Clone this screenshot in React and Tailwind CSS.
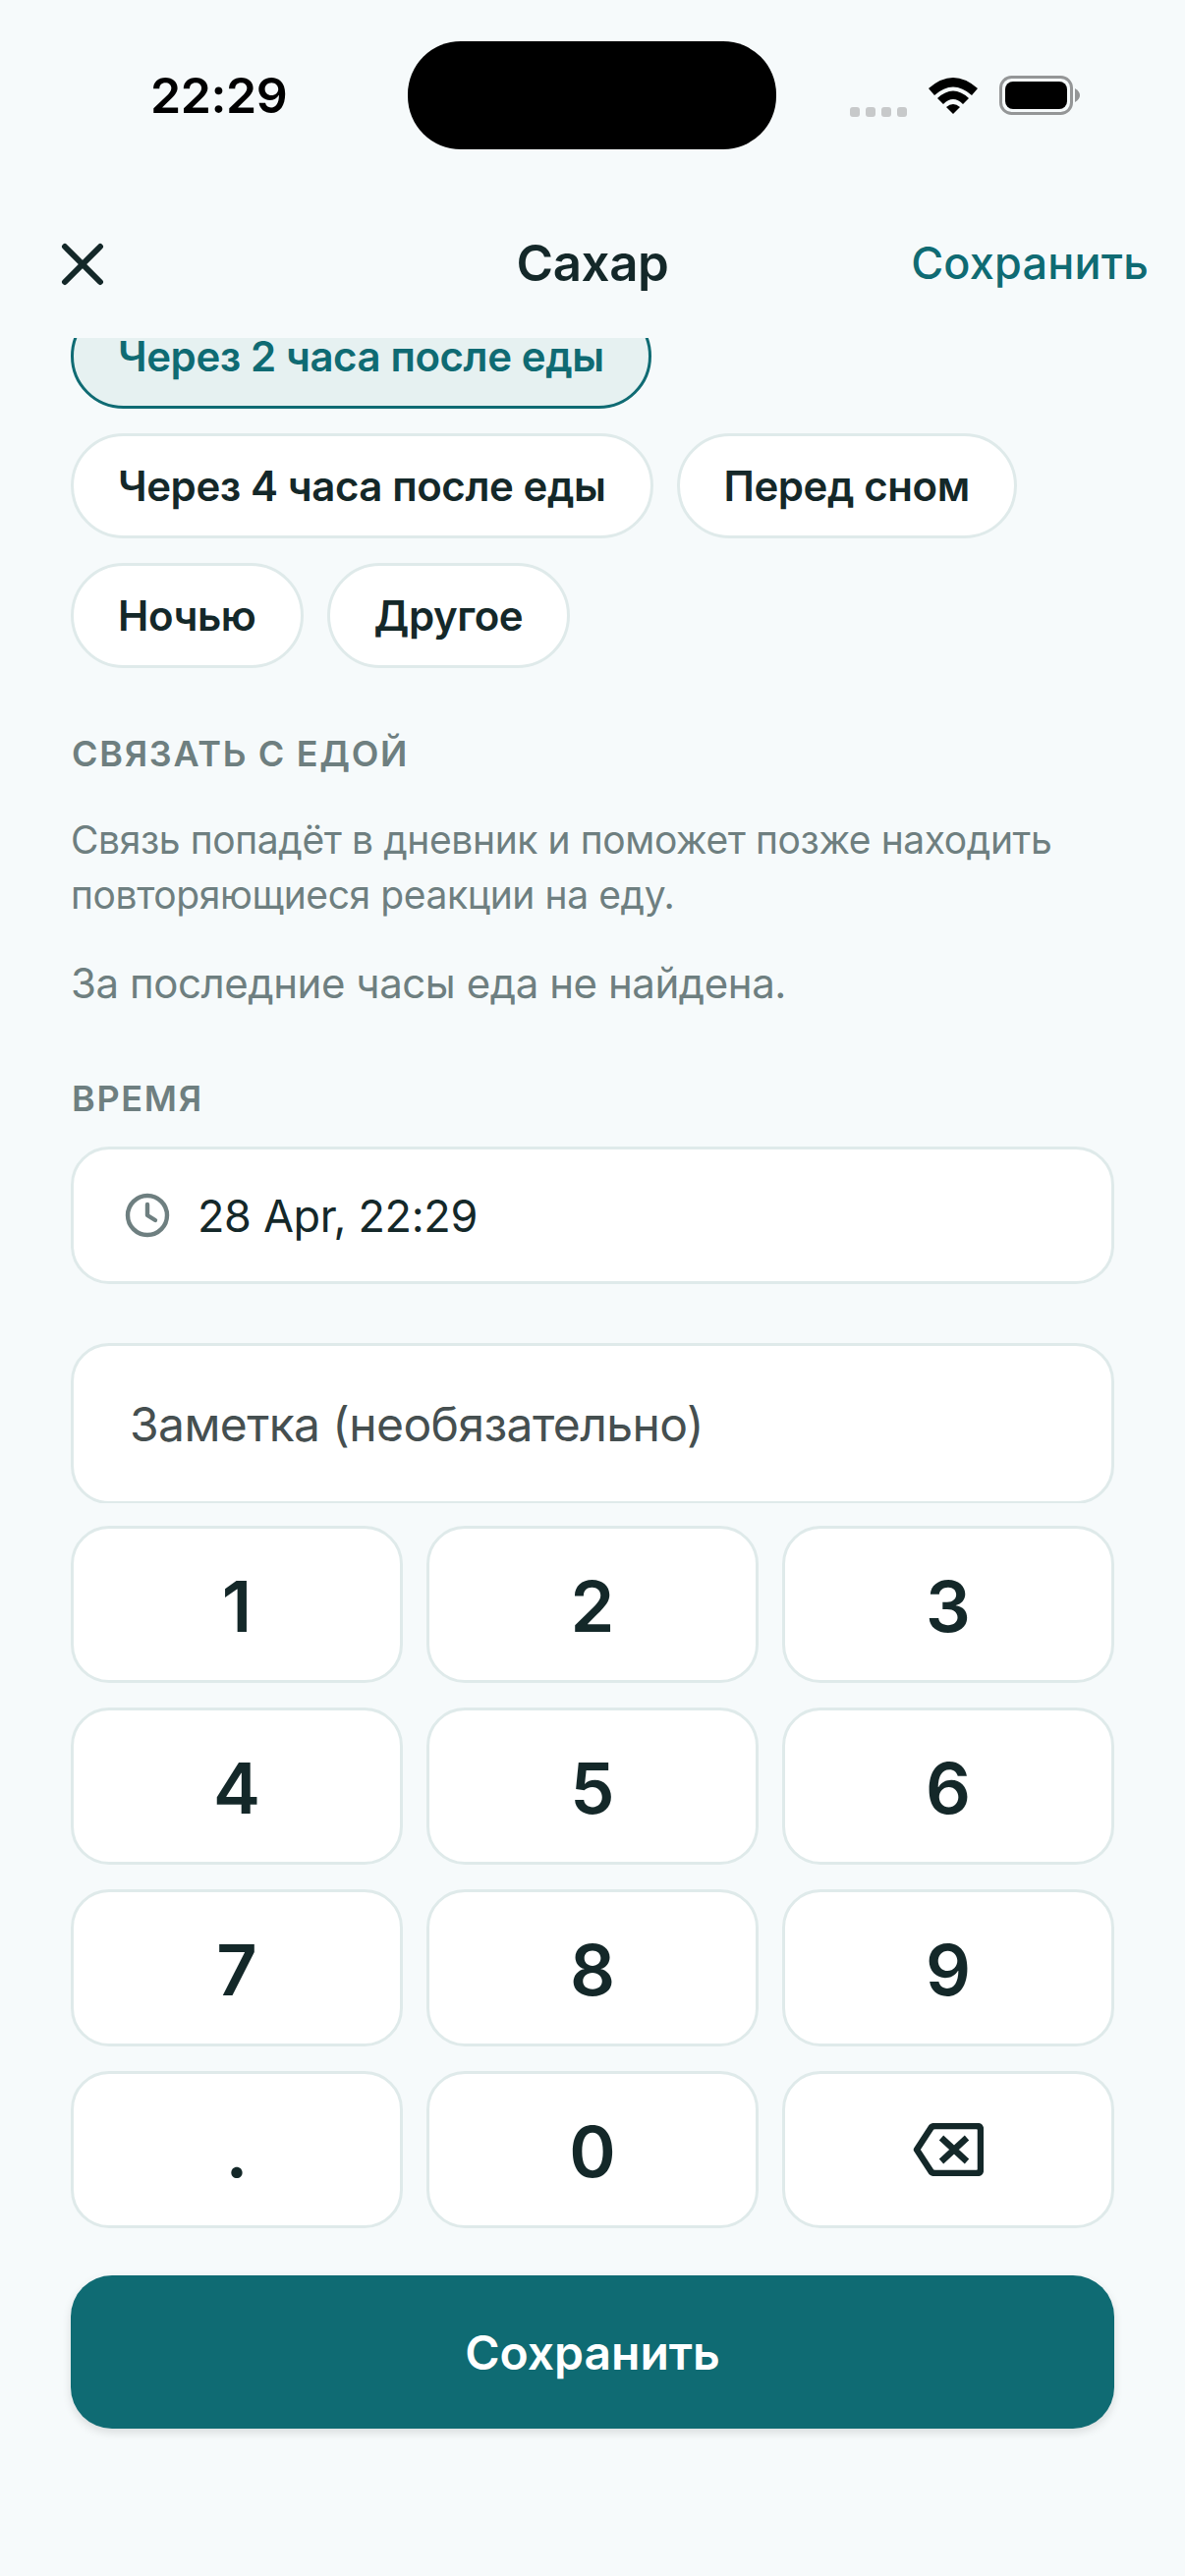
import React from 'react';
import { X } from 'lucide-react';

const chipRows = [
  [{ label: 'Через 2 часа после еды', active: true }],
  [{ label: 'Через 4 часа после еды' }, { label: 'Перед сном' }],
  [{ label: 'Ночью' }, { label: 'Другое' }],
];

const keys = ['1', '2', '3', '4', '5', '6', '7', '8', '9', '.', '0', 'back'];

const StatusIcons = () => (
  <div className="flex items-center">
    <div className="flex gap-[6px] mt-[33px] mr-[22px]">
      <span className="w-[10px] h-[10px] rounded-[3px] bg-[#c7c9ca]"></span>
      <span className="w-[10px] h-[10px] rounded-[3px] bg-[#c7c9ca]"></span>
      <span className="w-[10px] h-[10px] rounded-[3px] bg-[#c7c9ca]"></span>
      <span className="w-[10px] h-[10px] rounded-[3px] bg-[#c7c9ca]"></span>
    </div>
    <svg width="50" height="38" viewBox="0 0 50 38" className="mr-[22px]">
      <path d="M0 12 Q25 -10 50 12 L44 19 Q25 2 6 19 Z" fill="#000" />
      <path d="M9 22 Q25 7 41 22 L35 28 Q25 18 15 28 Z" fill="#000" />
      <path d="M18 31 Q25 25 32 31 L25 38 Z" fill="#000" />
    </svg>
    <svg width="82" height="40" viewBox="0 0 82 40">
      <rect x="1.5" y="1.5" width="72" height="37" rx="11" fill="none" stroke="#949697" strokeWidth="3" />
      <rect x="6" y="6" width="63" height="28" rx="8" fill="#000" />
      <path d="M77 13 Q82 16 82 20 Q82 24 77 27 Z" fill="#949697" />
    </svg>
  </div>
);

const StatusBar = () => (
  <div className="h-[194px] pt-[42px] flex items-start">
    <div className="w-[415px] h-[110px] flex items-center pl-[153px] text-[50px] font-semibold tracking-[-0.4px] text-black">22:29</div>
    <div className="w-[375px] h-[110px] bg-black rounded-[54px]"></div>
    <div className="flex-1 h-[110px] flex items-center pl-[75px]">
      <StatusIcons />
    </div>
  </div>
);

const Header = () => (
  <div className="h-[150px] grid grid-cols-[1fr_auto_1fr] items-center pb-[2px]">
    <button className="ml-[48px] mt-[2px] w-[72px] h-[72px] text-[#142829]">
      <X size={72} strokeWidth={2} />
    </button>
    <div className="text-[51px] font-semibold tracking-[-0.4px] text-[#142829]">Сахар</div>
    <div className="justify-self-end mr-[37px] text-[45px] font-medium tracking-[0.2px] text-[#0f6b73]">Сохранить</div>
  </div>
);

const Chip = ({ label, active }) => (
  <div className={`h-[107px] px-[45px] flex items-center rounded-[54px] border-[3px] text-[42px] font-semibold tracking-[-0.42px] whitespace-nowrap ${active ? 'bg-[#e6f1f1] border-[#0f6b73] text-[#0f6b73]' : 'bg-white border-[#dfeaea] text-[#142829]'}`}>
    {label}
  </div>
);

const SectionLabel = ({ children, className }) => (
  <div className={`text-[36px] leading-[44px] font-semibold tracking-[1.7px] text-[#6e7f80] ${className}`}>{children}</div>
);

const KeyButton = ({ value }) => (
  <button className="h-[160px] flex items-center justify-center bg-white rounded-[39px] border-[3px] border-[#dfeaea] text-[72px] font-semibold text-[#142829]">
    {value === 'back' ? (
      <svg width="72" height="54" viewBox="0 0 72 54" fill="none" stroke="#142829" strokeWidth="6.5" strokeLinejoin="round">
        <path d="M4 27 L19 4 Q20 3 23 3 L65 3 Q69 3 69 7 L69 47 Q69 51 65 51 L23 51 Q20 51 19 50 Z" />
        <path d="M29 15 L55 39 M55 15 L29 39" strokeLinejoin="miter" />
      </svg>
    ) : (
      <span className="pt-[3px]">{value}</span>
    )}
  </button>
);

const App = () => {
  return (
    <div className="w-[1206px] h-[2622px] bg-[#f6fafb] flex flex-col overflow-hidden" style={{ fontFamily: 'Inter, "Noto Sans", sans-serif' }}>
      <StatusBar />
      <Header />

      {/* Scrolled content, first chip is cut by the header */}
      <div className="h-[1186px] shrink-0 overflow-hidden px-[72px]">
        <div className="-mt-[35px] flex flex-col gap-[25px]">
          {chipRows.map((row, i) => (
            <div key={i} className="flex gap-[24px]">
              {row.map((chip) => (
                <Chip key={chip.label} label={chip.label} active={chip.active} />
              ))}
            </div>
          ))}
        </div>

        <SectionLabel className="mt-[65px] pl-[1px]">СВЯЗАТЬ С ЕДОЙ</SectionLabel>
        <p className="mt-[38px] text-[39px] leading-[56px] tracking-[-0.4px] text-[#6e7f80]">
          Связь попадёт в дневник и поможет позже находить повторяющиеся реакции на еду.
        </p>
        <p className="mt-[34px] text-[42px] leading-[56px] tracking-[-0.45px] text-[#6e7f80]">За последние часы еда не найдена.</p>

        <SectionLabel className="mt-[67px] pl-[1px]">ВРЕМЯ</SectionLabel>
        <div className="mt-[27px] h-[140px] flex items-center bg-white rounded-[39px] border-[3px] border-[#dfeaea] pl-[51px]">
          <svg width="48" height="48" viewBox="0 0 24 24" fill="none" stroke="#6e7f80" strokeWidth="2.2" strokeLinecap="round" strokeLinejoin="round">
            <circle cx="12" cy="12" r="10" />
            <path d="M12 6.5V12l4 2.5" />
          </svg>
          <span className="ml-[27px] pt-[2px] text-[45px] tracking-[-0.35px] text-[#142829]">28 Apr, 22:29</span>
        </div>
        <div className="mt-[60px] h-[164px] flex items-center bg-white rounded-[39px] border-[3px] border-[#dfeaea] pl-[57px] pt-[2px] text-[48px] tracking-[-0.6px] text-[#454f50]">
          Заметка (необязательно)
        </div>
      </div>

      {/* Keypad */}
      <div className="mt-[23px] px-[72px] grid grid-cols-3 gap-x-[24px] gap-y-[25px]">
        {keys.map((k) => (
          <KeyButton key={k} value={k} />
        ))}
      </div>

      <div className="px-[72px] mt-[48px]">
        <button className="w-full h-[156px] pt-[2px] rounded-[42px] bg-[#0f6b73] text-white text-[48px] font-semibold shadow-[0_4px_10px_rgba(0,0,0,0.12)]">
          Сохранить
        </button>
      </div>
    </div>
  );
};

export default App;
